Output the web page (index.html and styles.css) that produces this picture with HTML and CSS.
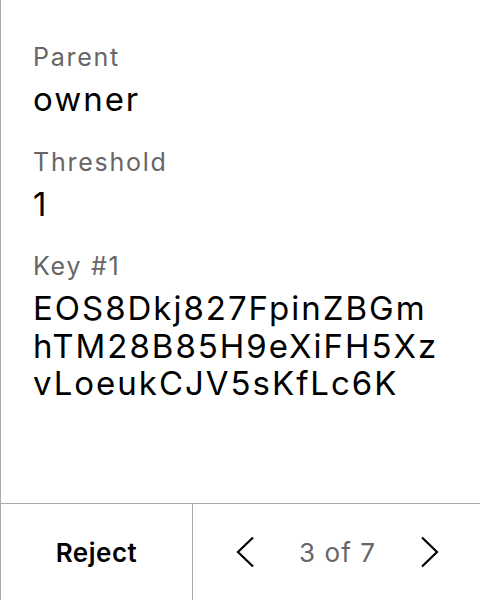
FILE: index.html
```html
<!DOCTYPE html>
<html>
<head>
<meta charset="utf-8">
<link rel="stylesheet" href="styles.css">
</head>
<body>
<div class="panel">
  <div class="content">
    <div class="field">
      <div class="label">Parent</div>
      <div class="value">owner</div>
    </div>
    <div class="field">
      <div class="label">Threshold</div>
      <div class="value">1</div>
    </div>
    <div class="field">
      <div class="label">Key #1</div>
      <div class="value key">EOS8Dkj827FpinZBGm<br>hTM28B85H9eXiFH5Xz<br>vLoeukCJV5sKfLc6K</div>
    </div>
  </div>
  <div class="footer">
    <div class="reject">Reject</div>
    <div class="pager">
      <svg class="chev" width="20" height="32" viewBox="0 0 20 32"><path d="M18 1.5 L3 16 L18 30.5" fill="none" stroke="#000" stroke-width="2.2"/></svg>
      <span class="count">3 of 7</span>
      <svg class="chev" width="20" height="32" viewBox="0 0 20 32"><path d="M2 1.5 L17 16 L2 30.5" fill="none" stroke="#000" stroke-width="2.2"/></svg>
    </div>
  </div>
</div>
</body>
</html>
```

FILE: styles.css
```css
html, body {
  margin: 0;
  padding: 0;
  background: #fff;
}
body {
  font-family: Inter, "Noto Sans", sans-serif;
  color: #000;
}
.panel {
  width: 480px;
  height: 600px;
  box-sizing: border-box;
  border-left: 1px solid #aaa;
  display: flex;
  flex-direction: column;
}
.content {
  flex: 1;
  padding: 42px 0 0 32px;
  display: flex;
  flex-direction: column;
  gap: 28px;
}
.field {
  display: flex;
  flex-direction: column;
  gap: 9px;
}
.label {
  font-size: 25px;
  line-height: 30px;
  letter-spacing: 0.07em;
  color: #666;
}
.value {
  font-size: 33px;
  line-height: 37.5px;
  letter-spacing: 0.06em;
}
.footer {
  height: 96px;
  border-top: 1px solid #aaa;
  display: flex;
}
.reject {
  width: 191px;
  border-right: 1px solid #aaa;
  display: flex;
  align-items: center;
  justify-content: center;
  font-size: 26px;
  font-weight: 600;
  letter-spacing: 0.02em;
}
.pager {
  flex: 1;
  display: flex;
  align-items: center;
  justify-content: space-between;
  padding: 0 40px 0 42px;
}
.count {
  font-size: 26px;
  letter-spacing: 0.04em;
  color: #666;
}
.chev {
  display: block;
}
```
